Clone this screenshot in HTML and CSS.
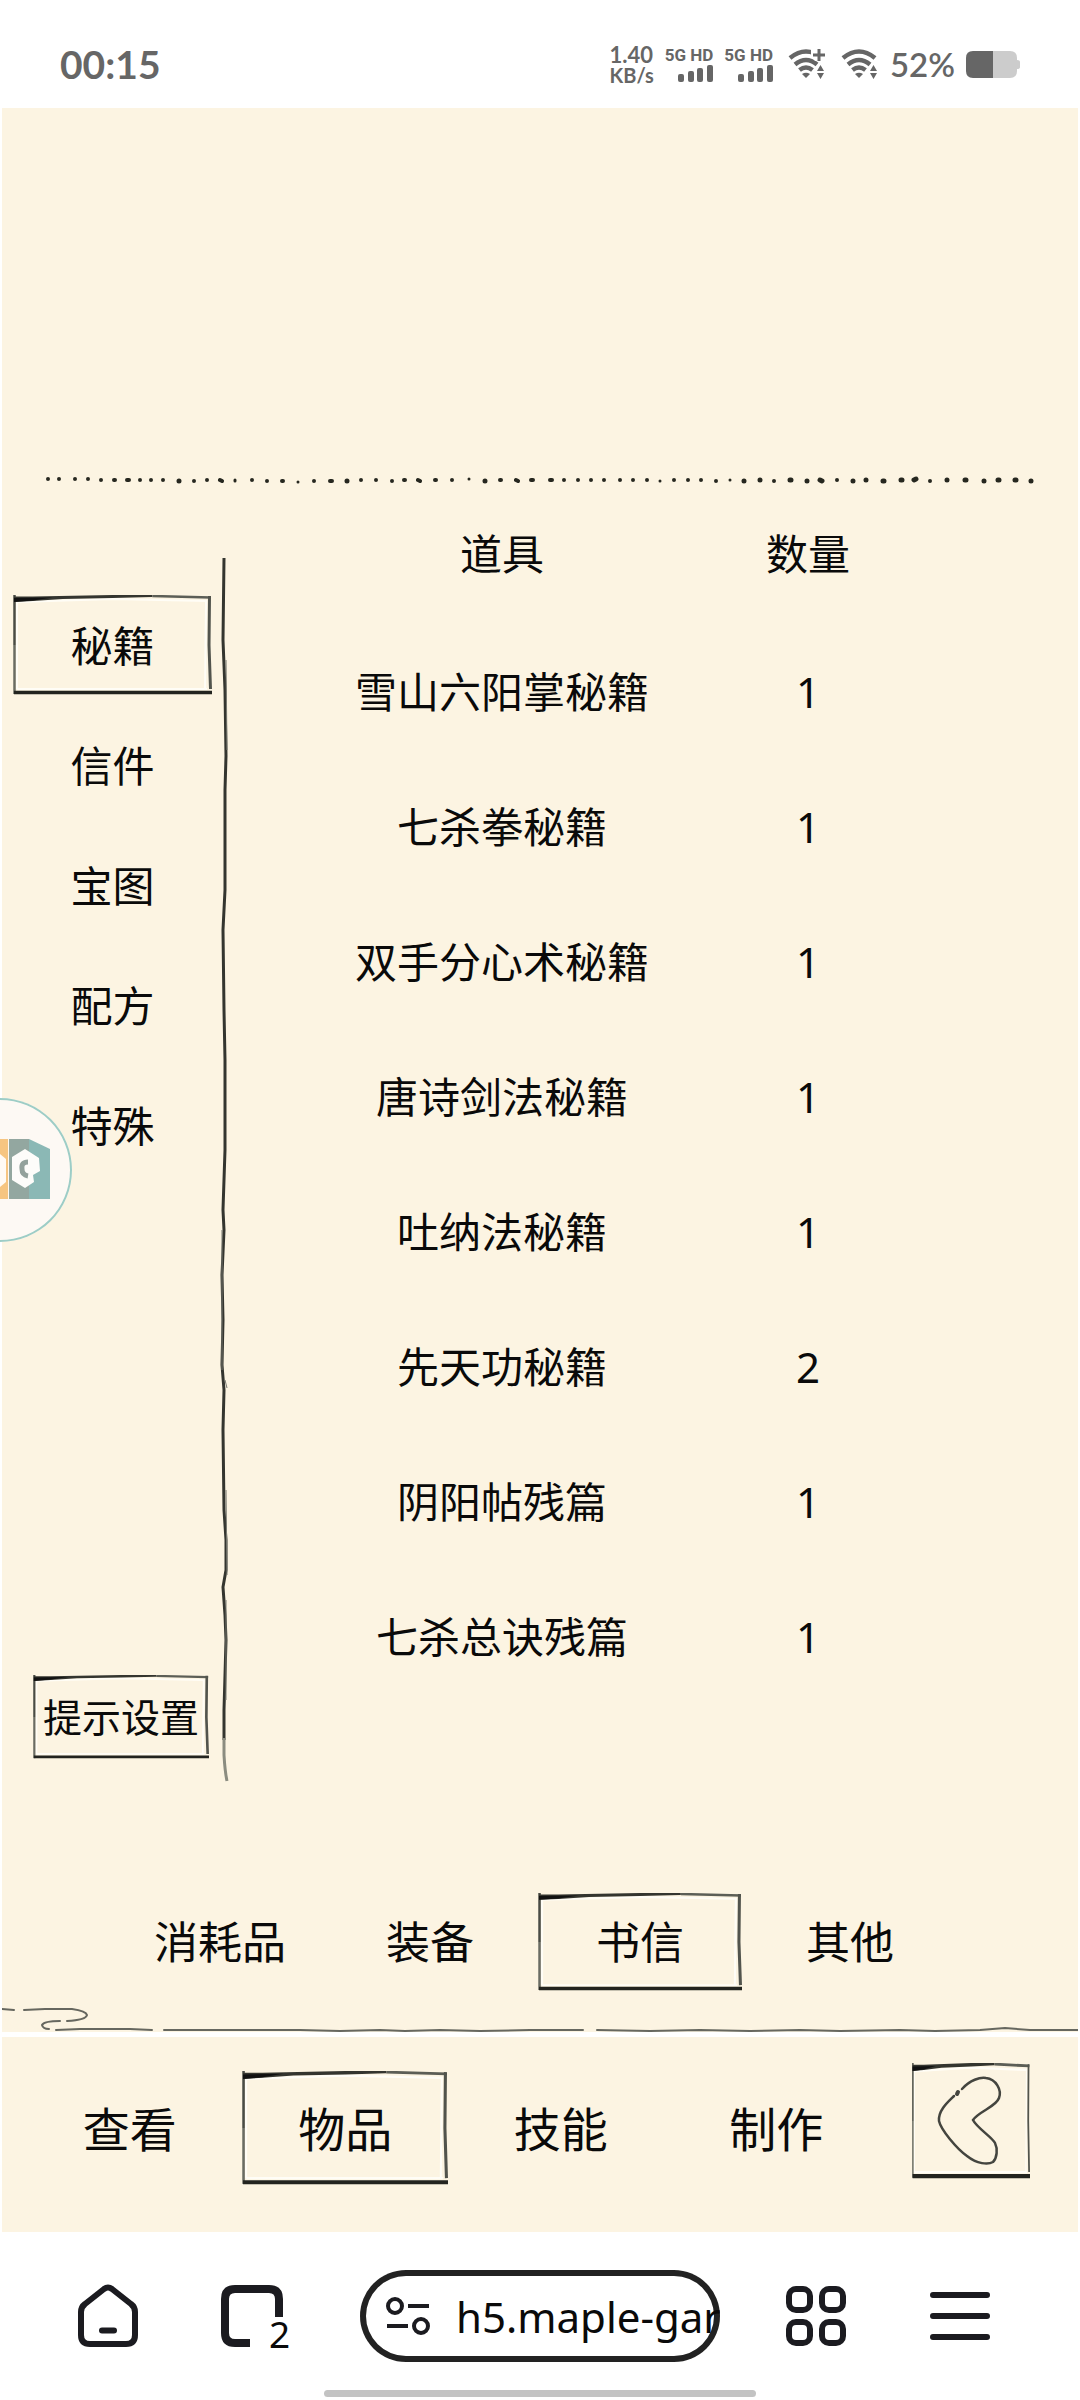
FILE: index.html
```html
<!DOCTYPE html>
<html lang="zh-CN">
<head>
    <meta charset="UTF-8">
    <meta name="viewport" content="width=device-width">
    <title>物品</title>
    <link rel="stylesheet" href="styles.css">
</head>
<body>
    <!-- shared drawings -->
    <svg class="defs" width="0" height="0" aria-hidden="true">
        <symbol id="frame" viewBox="0 0 200 100" preserveAspectRatio="none">
            <path d="M4 7V94M4 7L100 4L195 6M194 6L193 94M4 94H195" fill="none" stroke="#fffdf6" stroke-width="2"/>
            <path d="M1.500 0V50" stroke="#4a4c45" stroke-width="2.500"/>
            <path d="M1.500 50V99" stroke="#6a6c63" stroke-width="2.500"/>
            <path d="M1 1.500L20 1.500L100 0L140 0L140 2L100 3L50 4L20 6L1 7Z" fill="#34352f"/>
            <path d="M1 3L40 2.500L20 5.500L1 7Z" fill="#111"/>
            <path d="M140 1L199 2.500" stroke="#5c5e56" stroke-width="2.500"/>
            <path d="M197.500 1L197 50L198.500 94" fill="none" stroke="#52544d" stroke-width="3"/>
            <path d="M1 97.500L200 97.500" stroke="#23241f" stroke-width="3.500"/>
        </symbol>
        <symbol id="signal" viewBox="0 0 35 17">
            <g fill="#666">
                <rect x="0" y="9" width="6" height="8" rx="2"/>
                <rect x="10" y="6" width="6" height="11" rx="2"/>
                <rect x="19" y="3" width="6" height="14" rx="2"/>
                <rect x="29" y="0" width="6" height="17" rx="2"/>
            </g>
        </symbol>
        <symbol id="wifi" viewBox="0 0 38 30">
            <path d="M2 9Q18 -4 34 9M7 15.500Q18 6.500 29 15.500M11.500 21Q18 16 24.500 21" fill="none" stroke="#666" stroke-width="4.500"/>
            <path d="M14 25Q18 22.500 22 25L18 29Z" fill="#666"/>
            <path d="M28 18L36 18L36 30L28 30Z" fill="#fff"/>
            <path d="M29 22L32.500 16L36 22ZM29 24H36L32.500 30Z" fill="#666"/>
        </symbol>
    </svg>

    <header class="status-bar">
        <span class="clock">00:15</span>
        <div class="status-icons">
            <div class="speed"><span>1.40</span><small>KB/s</small></div>
            <div class="sim">
                <span>5G HD</span>
                <svg width="35" height="17"><use href="#signal"/></svg>
            </div>
            <div class="sim">
                <span>5G HD</span>
                <svg width="35" height="17"><use href="#signal"/></svg>
            </div>
            <svg class="wifi" width="38" height="30">
                <use href="#wifi"/>
                <path d="M23 0H38V12H27L23 7Z" fill="#fff"/>
                <path d="M31 0V12M25 6H37" stroke="#666" stroke-width="3"/>
            </svg>
            <svg class="wifi" width="38" height="30"><use href="#wifi"/></svg>
            <span class="percent">52%</span>
            <svg width="54" height="27" viewBox="0 0 54 27">
                <path d="M27 0H44Q51 0 51 7V9Q54 9 54 11V16Q54 18 51 18V20Q51 27 44 27H27Z" fill="#ccc"/>
                <path d="M27 0H7Q0 0 0 7V20Q0 27 7 27H27Z" fill="#666"/>
            </svg>
        </div>
    </header>

    <main class="game">
        <div class="log"></div>
        <svg class="dots" viewBox="2 472 1076 16">
            <g fill="none" stroke="#26271f" stroke-linecap="round">
                <path stroke-width="4" d="M48 479h0M59 479h0M75 479h0M88 479h0M101 480h0M114 480h1M127 480h2M140 480h0M151 480h0M163 480h0M194 481h0M207 480h0M220 480l2 1M252 480h0M267 481h0M282 481h1M314 481h0M330 481h2M361 480h0M376 480h0M392 481h0M404 480h1M418 480l2 1M435 480h1M452 480h0M500 480h1M516 480l2 1M531 480h2M550 480h2M564 480h0M578 480h0M591 480h0M604 480h0M620 480h0M633 480h0M647 480h0M674 480h0M688 480h0M701 480h0M716 481h0M774 481h0M837 480h0M930 481h0"/>
                <path stroke-width="3" d="M235 480v1M298 482h0M469 479h0M660 481h0M730 480h0"/>
                <path stroke-width="5" d="M179 481h0M347 481h0M485 481h0M744 481h0M760 480h0M790 480h1M807 481h0M820 480l2 1M853 481h0M866 480h0M883 481h1M901 480h1M914 480l2 -1M947 480h0M965 480h1M984 481h0M998 480h1M1015 480h1M1031 481h0"/>
            </g>
        </svg>

        <section class="panel">
            <nav class="sidebar">
                <button class="sketch side-tab"><svg><use href="#frame"/></svg><span>秘籍</span></button>
                <button class="sketch side-tab"><span>信件</span></button>
                <button class="sketch side-tab"><span>宝图</span></button>
                <button class="sketch side-tab"><span>配方</span></button>
                <button class="sketch side-tab"><span>特殊</span></button>
                <button class="sketch tip-btn"><svg><use href="#frame"/></svg><span>提示设置</span></button>
            </nav>

            <svg class="divider" viewBox="216 558 16 1224" preserveAspectRatio="none">
                <path d="M224 558L223 640L225 690L226 756L225 790L225 890L223 930L224 1010L225 1060L225 1150L223 1210L224 1230L222 1275L223 1320L222 1365L224 1390L223 1430L224 1510L226 1540L226 1570L223 1587L225 1615L226 1640L224 1710L224 1740" fill="none" stroke="#34352f" stroke-width="3"/>
                <path d="M226 660L227 750M225 1380L227 1388M226 1490L227 1575M222 1230V1370M226 1600V1700" fill="none" stroke="#777870" stroke-width="1"/>
                <path d="M224 1738L224 1755Q225 1772 227 1781" fill="none" stroke="#8b8c80" stroke-width="3"/>
            </svg>

            <div class="content">
                <table class="items">
                    <thead>
                        <tr><th>道具</th><th>数量</th></tr>
                    </thead>
                    <tbody>
                        <tr><td>雪山六阳掌秘籍</td><td>1</td></tr>
                        <tr><td>七杀拳秘籍</td><td>1</td></tr>
                        <tr><td>双手分心术秘籍</td><td>1</td></tr>
                        <tr><td>唐诗剑法秘籍</td><td>1</td></tr>
                        <tr><td>吐纳法秘籍</td><td>1</td></tr>
                        <tr><td>先天功秘籍</td><td>2</td></tr>
                        <tr><td>阴阳帖残篇</td><td>1</td></tr>
                        <tr><td>七杀总诀残篇</td><td>1</td></tr>
                    </tbody>
                </table>
            </div>
        </section>

        <nav class="category">
            <button class="sketch"><span>消耗品</span></button>
            <button class="sketch"><span>装备</span></button>
            <button class="sketch"><svg><use href="#frame"/></svg><span>书信</span></button>
            <button class="sketch"><span>其他</span></button>
        </nav>

        <svg class="river" viewBox="2 2004 1076 28">
            <g fill="none" stroke="#66675f" stroke-width="2" stroke-linecap="round">
                <path d="M2 2009L14 2010M24 2010L45 2009L72 2009Q86 2011 87 2015Q86 2020 67 2021M60 2021Q44 2021 42 2025Q43 2029 49 2029"/>
                <path d="M56 2030L80 2029L130 2029L152 2030M164 2030L300 2030L340 2031L380 2030L405 2031L440 2030L480 2031L530 2030L583 2030M597 2030L650 2031L700 2030L750 2031L800 2030L840 2031L900 2030L935 2031L980 2030L1005 2028L1030 2030L1078 2030"/>
            </g>
        </svg>

        <nav class="main-nav">
            <button class="sketch"><span>查看</span></button>
            <button class="sketch"><svg><use href="#frame"/></svg><span>物品</span></button>
            <button class="sketch"><span>技能</span></button>
            <button class="sketch"><span>制作</span></button>
            <button class="sketch back" aria-label="返回">
                <svg><use href="#frame"/></svg>
                <svg viewBox="0 0 118 116" fill="none" stroke="#44453f" stroke-width="2.500" stroke-linecap="round">
                    <path d="M50 26C58 17 68 14 74 15C84 16 90 27 87 35C84 44 67 48 61 57C65 65 80 74 83 80C86 86 85 95 81 99C76 102 65 101 55 93C45 86 29 67 27 58C26 47 37 38 42 33"/>
                    <path d="M45 31L46 29" stroke-width="4"/>
                </svg>
            </button>
        </nav>
    </main>

    <footer class="browser-bar">
        <div class="tools">
            <button class="tool" aria-label="主页">
                <svg width="60" height="64" viewBox="0 0 60 64" fill="none" stroke="#1b1b20" stroke-width="6" stroke-linecap="round" stroke-linejoin="round">
                    <path d="M26 5Q30 2 34 5L53 20Q57 23 57 28V51Q57 60 48 60H12Q3 60 3 51V28Q3 23 7 20Z"/>
                    <path d="M24 46.500H36"/>
                </svg>
            </button>
            <button class="tool tabs" aria-label="标签页">
                <svg width="62" height="62" viewBox="0 0 62 62" fill="none" stroke="#1b1b20" stroke-width="8">
                    <path d="M58 32V14Q58 4 48 4H14Q4 4 4 14V48Q4 58 14 58H29"/>
                </svg>
                <span class="tab-count">2</span>
            </button>
            <button class="address">
                <svg width="44" height="38" viewBox="0 0 44 38" fill="none" stroke="#1b1b20" stroke-width="4">
                    <circle cx="9" cy="9" r="7"/>
                    <path d="M22 9H43M1 29H22"/>
                    <circle cx="35" cy="29" r="7"/>
                </svg>
                <span>h5.maple-gar</span>
            </button>
            <button class="tool" aria-label="应用">
                <svg width="60" height="60" viewBox="0 0 60 60" fill="none" stroke="#1b1b20" stroke-width="6">
                    <rect x="3" y="3" width="21" height="21" rx="7"/>
                    <rect x="36" y="3" width="21" height="21" rx="7"/>
                    <rect x="3" y="36" width="21" height="21" rx="7"/>
                    <rect x="36" y="36" width="21" height="21" rx="7"/>
                </svg>
            </button>
            <button class="tool" aria-label="菜单">
                <svg width="60" height="48" viewBox="0 0 60 48" stroke="#1b1b20" stroke-width="6" stroke-linecap="round">
                    <path d="M3 3H57M3 24H57M3 45H57"/>
                </svg>
            </button>
        </div>
        <div class="handle"></div>
    </footer>

    <!-- floating button, half off the left edge -->
    <button class="float-ball" aria-label="悬浮球">
        <svg width="144" height="144" viewBox="-72 -72 144 144">
            <path d="M-42 -31H8V29H-42Z" fill="#f6c581"/>
            <path d="M-20 -22L0 -16L6 -11V12L0 17L-20 22Z" fill="#fffaf4"/>
            <path d="M9 -31H29V29H9Z" fill="#93a7a0"/>
            <path d="M29 -31L50 -21V29H29Z" fill="#8bb8b5"/>
            <path d="M25 -21L39 -12L40 1L33 5L34 12L25 18L12 10V-13Z" fill="#fdfcfa"/>
            <path d="M28 -8Q21 -8 22 -1Q22 5 28 6" fill="none" stroke="#93a19c" stroke-width="5"/>
        </svg>
    </button>
</body>
</html>
```
FILE: styles.css
```css
* {
    box-sizing: border-box;
}

body {
    margin: 0;
    position: relative;
    overflow-x: hidden;
    background: #fff;
    color: #0a0a0a;
    font-family: "Noto Sans", "Noto Sans CJK SC", sans-serif;
}

button {
    padding: 0;
    border: 0;
    background: none;
    color: inherit;
    font: inherit;
}

svg {
    display: block;
}

.defs {
    position: absolute;
}

/* status bar */
.status-bar {
    display: flex;
    justify-content: space-between;
    align-items: center;
    height: 108px;
    padding: 20px 60px 0;
    color: #666;
    font-family: Lato, sans-serif;
    font-weight: bold;
}

.clock {
    font-size: 39px;
}

.status-icons {
    display: flex;
    align-items: center;
    gap: 11px;
}

.speed {
    display: flex;
    flex-direction: column;
    padding-top: 2px;
    font-size: 22px;
    line-height: 20px;
}

.speed small {
    font-size: 20px;
}

.sim {
    display: flex;
    flex-direction: column;
    align-items: flex-end;
    gap: 2px;
    font: bold 17px/16px Roboto, sans-serif;
}

.wifi {
    margin-left: 4px;
}

.percent {
    font-size: 33px;
    font-weight: 600;
}

/* game page */
.game {
    margin: 0 2px;
    background: #fcf4e2;
}

.log {
    height: 364px;
}

.dots,
.river {
    width: 100%;
}

.panel {
    display: flex;
}

.sketch {
    display: grid;
    place-items: center;
}

.sketch > * {
    grid-area: 1 / 1;
}

.sketch svg {
    width: 100%;
    height: 100%;
}

.sketch span {
    padding-bottom: 4px;
}

.sidebar {
    display: flex;
    flex-direction: column;
    gap: 20px;
    width: 214px;
    padding: 107px 4px 23px 11px;
}

.side-tab {
    height: 100px;
    font-size: 42px;
}

.tip-btn {
    width: 176px;
    height: 84px;
    margin: 480px 0 0 20px;
    font-size: 39px;
}

.divider {
    width: 16px;
    height: 1224px;
    margin-top: 70px;
}

.content {
    flex: 1;
}

.items {
    width: 612px;
    margin: 0 auto;
    border-collapse: collapse;
    table-layout: fixed;
    font-size: 42px;
    line-height: 60px;
    text-align: center;
}

.items th {
    height: 136px;
    padding: 36px 0 40px;
    font-weight: normal;
}

.items td {
    height: 135px;
    padding: 0;
}

.category {
    display: grid;
    grid-template-columns: repeat(4, 1fr);
    justify-items: center;
    margin: 111px 0 13px;
    padding: 0 123px 0 113px;
    font-size: 44px;
}

.category button {
    width: 204px;
    height: 98px;
}

.main-nav {
    display: grid;
    grid-template-columns: repeat(4, 1fr) 146px;
    justify-items: center;
    align-items: end;
    padding: 26px 48px 47px 20px;
    border-top: 5px solid #fff;
    font-size: 47px;
}

.main-nav button {
    width: 206px;
    height: 114px;
}

.main-nav .back {
    justify-self: end;
    width: 118px;
    height: 116px;
    margin-bottom: 6px;
}

/* browser bar */
.browser-bar {
    padding: 38px 0 3px;
}

.tools {
    display: grid;
    grid-template-columns: 144px 144px 1fr 144px 144px;
    align-items: center;
    justify-items: center;
    padding: 0 48px 0 36px;
}

.tabs {
    position: relative;
}

.tab-count {
    position: absolute;
    left: 48px;
    top: 31px;
    font-size: 37px;
    line-height: 36px;
}

.address {
    display: flex;
    align-items: center;
    gap: 26px;
    justify-self: stretch;
    height: 92px;
    margin: 0 24px 0 36px;
    padding-left: 26px;
    border-radius: 46px;
    box-shadow: inset 0 0 0 6px #222;
    overflow: hidden;
    font-size: 42px;
    white-space: nowrap;
}

.address svg {
    flex: none;
}

.handle {
    width: 40%;
    height: 7px;
    margin: 28px auto 0;
    border-radius: 4px;
    background: #c3c3c3;
}

.float-ball {
    position: absolute;
    left: -72px;
    top: 1098px;
    width: 144px;
    height: 144px;
    border-radius: 50%;
    background: #fdf9f4;
    box-shadow: inset 0 0 0 2px #9dcdc6;
}
```
